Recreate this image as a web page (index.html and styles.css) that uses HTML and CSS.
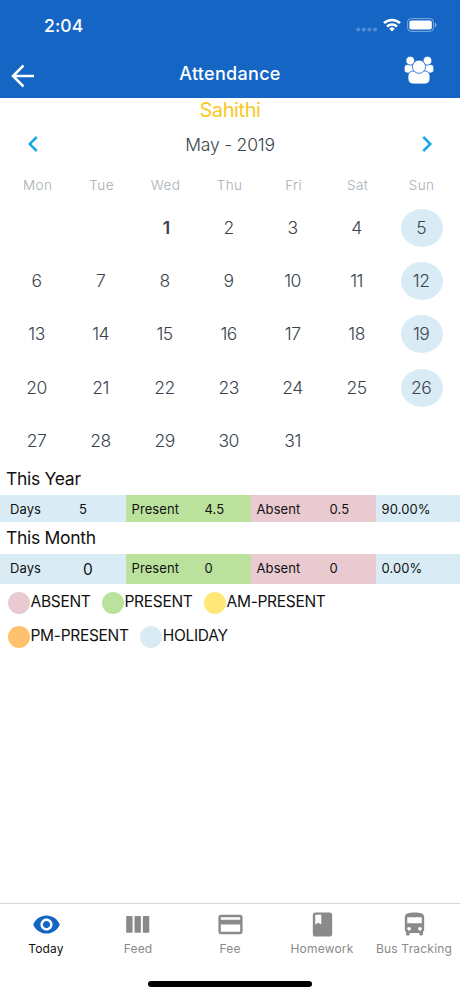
FILE: index.html
```html
<!DOCTYPE html>
<html lang="en">
<head>
    <meta charset="UTF-8">
    <meta name="viewport" content="width=device-width, initial-scale=1.0">
    <title>Attendance</title>
    <link rel="stylesheet" href="styles.css">
</head>
<body>
    <header class="header">
        <div class="status-bar">
            <span class="clock">2:04</span>
            <div class="status-icons">
                <svg width="22" height="5" viewBox="0 0 22 5" fill="#fff" opacity="0.25">
                    <circle cx="2.2" cy="2.5" r="2.1"/><circle cx="7.8" cy="2.5" r="2.1"/>
                    <circle cx="13.4" cy="2.5" r="2.1"/><circle cx="19" cy="2.5" r="2.1"/>
                </svg>
                <svg class="wifi" width="18" height="14" viewBox="0 0 18 14" fill="none" stroke="#fff" stroke-width="2.5">
                    <path d="M1 5.2a11.3 11.3 0 0 1 16 0"/>
                    <path d="M4 8.6a7.1 7.1 0 0 1 10 0"/>
                    <path d="M9 13.5L6.2 10.7a4 4 0 0 1 5.6 0z" fill="#fff" stroke="none"/>
                </svg>
                <svg width="30" height="14" viewBox="0 0 30 14">
                    <rect x=".6" y=".6" width="26" height="12.8" rx="3.8" fill="none" stroke="#fff" stroke-opacity=".45"/>
                    <rect x="2.4" y="2.4" width="22.4" height="9.2" rx="2" fill="#fff"/>
                    <path d="M28 4.8c2 .7 2 3.7 0 4.4z" fill="#fff" opacity=".5"/>
                </svg>
            </div>
        </div>
        <div class="nav-bar">
            <svg class="back" width="24" height="24" viewBox="0 0 24 24" fill="none" stroke="#fff" stroke-width="2.5">
                <path d="M23 12H2.5M12.5 1.5L2 12l10.5 10.5"/>
            </svg>
            <h1 class="title">Attendance</h1>
            <svg class="group" width="30" height="28" viewBox="0 0 30 28" fill="#fff" stroke="#1565c5" stroke-width=".8">
                <rect x=".2" y="8.5" width="12" height="8.5" rx="3"/>
                <rect x="17.8" y="8.5" width="12" height="8.500" rx="3"/>
                <circle cx="6.3" cy="4.7" r="4.4"/>
                <circle cx="23.5" cy="4.7" r="4.4"/>
                <rect x="4" y="15" width="22" height="13" rx="5"/>
                <circle cx="15" cy="10.7" r="6.6"/>
            </svg>
        </div>
    </header>

    <main class="content">
        <div class="student">Sahithi</div>

        <!-- Calendar -->
        <div class="month-bar">
            <svg width="10" height="16" viewBox="0 0 10 16" fill="none" stroke="#18a8e8" stroke-width="2.5"><path d="M8.7 1L1.7 8l7 7"/></svg>
            <span class="month">May - 2019</span>
            <svg width="10" height="16" viewBox="0 0 10 16" fill="none" stroke="#18a8e8" stroke-width="2.5"><path d="M1.3 1l7 7-7 7"/></svg>
        </div>
        <div class="weekdays">
            <span>Mon</span><span>Tue</span><span>Wed</span><span>Thu</span><span>Fri</span><span>Sat</span><span>Sun</span>
        </div>
        <div class="days">
            <span class="day"></span><span class="day"></span><span class="day today">1</span><span class="day">2</span><span class="day">3</span><span class="day">4</span><span class="day holiday">5</span>
            <span class="day">6</span><span class="day">7</span><span class="day">8</span><span class="day">9</span><span class="day">10</span><span class="day">11</span><span class="day holiday">12</span>
            <span class="day">13</span><span class="day">14</span><span class="day">15</span><span class="day">16</span><span class="day">17</span><span class="day">18</span><span class="day holiday">19</span>
            <span class="day">20</span><span class="day">21</span><span class="day">22</span><span class="day">23</span><span class="day">24</span><span class="day">25</span><span class="day holiday">26</span>
            <span class="day">27</span><span class="day">28</span><span class="day">29</span><span class="day">30</span><span class="day">31</span>
        </div>

        <!-- Totals -->
        <h2 class="summary-title">This Year</h2>
        <div class="summary">
            <div class="cell cell-days"><span>Days</span><span>5</span></div>
            <div class="cell cell-present"><span>Present</span><span>4.5</span></div>
            <div class="cell cell-absent"><span>Absent</span><span>0.5</span></div>
            <div class="cell cell-percent">90.00%</div>
        </div>
        <h2 class="summary-title">This Month</h2>
        <div class="summary summary-month">
            <div class="cell cell-days"><span>Days</span><span class="big">0</span></div>
            <div class="cell cell-present"><span>Present</span><span>0</span></div>
            <div class="cell cell-absent"><span>Absent</span><span>0</span></div>
            <div class="cell cell-percent">0.00%</div>
        </div>

        <div class="legend">
            <div class="legend-item"><i class="dot absent"></i><span>ABSENT</span></div>
            <div class="legend-item"><i class="dot present"></i><span>PRESENT</span></div>
            <div class="legend-item"><i class="dot am"></i><span>AM-PRESENT</span></div>
            <div class="legend-item"><i class="dot pm"></i><span>PM-PRESENT</span></div>
            <div class="legend-item"><i class="dot off"></i><span>HOLIDAY</span></div>
        </div>
    </main>

    <footer class="footer">
        <nav class="tabs">
            <div class="tab active">
                <svg viewBox="0 0 24 24"><path d="M12 4.5C7 4.5 2.73 7.61 1 12c1.73 4.39 6 7.5 11 7.5s9.27-3.11 11-7.5c-1.73-4.39-6-7.5-11-7.5zM12 17c-2.76 0-5-2.24-5-5s2.24-5 5-5 5 2.24 5 5-2.24 5-5 5zm0-8c-1.66 0-3 1.34-3 3s1.34 3 3 3 3-1.34 3-3-1.34-3-3-3z"/></svg>
                <span>Today</span>
            </div>
            <div class="tab">
                <svg viewBox="0 0 24 24"><rect x="1.8" y="4.9" width="5.3" height="14" rx=".7"/><rect x="8.7" y="4.9" width="5.3" height="14" rx=".7"/><rect x="15.6" y="4.9" width="5.3" height="14" rx=".7"/></svg>
                <span>Feed</span>
            </div>
            <div class="tab">
                <svg viewBox="0 0 24 24"><path d="M20 4H4c-1.11 0-1.99.89-1.99 2L2 18c0 1.11.89 2 2 2h16c1.11 0 2-.89 2-2V6c0-1.11-.89-2-2-2zm0 14H4v-6h16v6zm0-10H4V6h16v2z"/></svg>
                <span>Fee</span>
            </div>
            <div class="tab">
                <svg viewBox="0 0 24 24"><path d="M18 2H6c-1.1 0-2 .9-2 2v16c0 1.1.9 2 2 2h12c1.1 0 2-.9 2-2V4c0-1.1-.9-2-2-2zM6 4h5v8l-2.5-1.5L6 12V4z"/></svg>
                <span>Homework</span>
            </div>
            <div class="tab">
                <svg viewBox="0 0 24 24"><path d="M4 16c0 .88.39 1.67 1 2.22V20c0 .55.45 1 1 1h1c.55 0 1-.45 1-1v-1h8v1c0 .55.45 1 1 1h1c.55 0 1-.45 1-1v-1.78c.61-.55 1-1.34 1-2.22V6c0-3.5-3.58-4-8-4s-8 .5-8 4v10zm3.5 1c-.83 0-1.5-.67-1.5-1.5S6.67 14 7.5 14s1.5.67 1.5 1.5S8.33 17 7.5 17zm9 0c-.83 0-1.5-.67-1.5-1.5s.67-1.5 1.5-1.5 1.5.67 1.5 1.5-.67 1.5-1.5 1.5zm1.5-6H6V6h12v5z"/></svg>
                <span>Bus Tracking</span>
            </div>
        </nav>
        <div class="home-indicator"></div>
    </footer>
</body>
</html>
```
FILE: styles.css
```css
* {
    box-sizing: border-box;
}

body {
    margin: 0;
    height: 996px;
    display: flex;
    flex-direction: column;
    font-family: Inter, "Liberation Sans", sans-serif;
    color: #111;
    background: #fff;
    overflow: hidden;
}

svg {
    display: block;
    flex: none;
}

.header {
    height: 98px;
    background: #1565c5;
    color: #fff;
}

.status-bar {
    height: 50px;
    padding: 0 23.5px 0 44px;
    display: flex;
    align-items: center;
    justify-content: space-between;
}

.clock {
    font-size: 17.5px;
    font-weight: 500;
    letter-spacing: 0.1px;
}

.status-icons {
    display: flex;
    align-items: center;
    gap: 5px;
}

.status-icons svg:first-child {
    margin-top: 9px;
}

.wifi {
    margin-right: 1px;
}

.nav-bar {
    height: 48px;
    padding: 0 26.5px 0 11px;
    display: grid;
    grid-template-columns: 54px 1fr 38.5px;
    align-items: center;
}

.back {
    margin-top: 4px;
}

.title {
    margin: -2px 0 0;
    font-size: 18px;
    font-weight: 500;
    letter-spacing: 0.3px;
    text-align: center;
}

.group {
    justify-self: end;
    margin-top: -8px;
}

.content {
    flex: 1;
}

.student {
    height: 25px;
    line-height: 25px;
    font-size: 20px;
    letter-spacing: -0.4px;
    text-align: center;
    color: #f8c922;
}

.month-bar {
    height: 42px;
    padding: 0 28px;
    display: flex;
    align-items: center;
    justify-content: space-between;
}

.month {
    font-size: 17.5px;
    font-weight: 300;
    letter-spacing: -0.2px;
    color: #39434b;
}

.weekdays,
.days {
    display: grid;
    grid-template-columns: repeat(7, 64px);
    padding-left: 5.6px;
    justify-items: center;
    align-items: center;
}

.weekdays {
    height: 36px;
    padding-top: 4px;
    font-size: 13.5px;
    letter-spacing: 0.4px;
    font-weight: 300;
    color: #a6aeb4;
}

.days {
    grid-auto-rows: 53.3px;
    height: 267px;
}

.day {
    width: 42px;
    height: 38px;
    line-height: 38px;
    padding-right: 2px;
    border-radius: 21px / 19px;
    text-align: center;
    font-size: 17.5px;
    font-weight: 300;
    letter-spacing: -0.5px;
    color: #39434b;
}

.today {
    font-weight: 600;
    padding-left: 3px;
}

.holiday {
    padding-right: 1px;
    background: #d9ecf6;
}

.summary-title {
    margin: 0;
    height: 27px;
    line-height: 22px;
    padding-left: 6px;
    font-size: 17.5px;
    font-weight: 400;
    letter-spacing: -0.3px;
}

.summary {
    height: 27px;
    margin-bottom: 5px;
    display: grid;
    grid-template-columns: 125.5px 125px 125px 1fr;
    font-size: 13px;
    letter-spacing: 0.1px;
}

.summary-month {
    height: 30px;
}

.cell {
    display: grid;
    grid-template-columns: 73px 1fr;
    align-items: center;
    padding-left: 6px;
}

.summary-month .cell {
    padding-bottom: 2px;
}

.cell-days {
    grid-template-columns: 69px 1fr;
    padding-left: 10px;
    background: #d9ecf6;
}

.cell-present {
    background: #bbe29d;
}

.cell-absent {
    background: #e9cad1;
}

.cell-percent {
    background: #d9ecf6;
}

.big {
    font-size: 15.5px;
    padding: 2px 0 0 4px;
}

.legend {
    display: flex;
    flex-wrap: wrap;
    column-gap: 11.5px;
    padding: 0 8px;
    width: 400px;
}

.legend-item {
    display: flex;
    height: 33.5px;
    line-height: 26px;
    font-size: 15.5px;
    letter-spacing: -0.3px;
}

.dot {
    width: 22px;
    height: 22px;
    margin-top: 3px;
    margin-right: 0.5px;
    border-radius: 50%;
}

.absent {
    background: #e9cad1;
}

.present {
    background: #bbe29d;
}

.am {
    background: #ffe878;
}

.pm {
    background: #ffc16d;
}

.off {
    background: #d9ecf6;
}

.footer {
    height: 93px;
    border-top: 1px solid #d6d6d6;
}

.tabs {
    height: 77px;
    padding-top: 6px;
    display: grid;
    grid-template-columns: repeat(5, 1fr);
}

.tab {
    display: flex;
    flex-direction: column;
    align-items: center;
    font-size: 12px;
    letter-spacing: 0.2px;
    line-height: 20px;
    white-space: nowrap;
    color: #8a8a8a;
}

.tab svg {
    width: 29px;
    height: 29px;
    fill: #8a8a8a;
}

.tab.active {
    color: #111;
}

.tab.active svg {
    fill: #1565c5;
}

.home-indicator {
    width: 164px;
    height: 6px;
    margin: 0 auto;
    border-radius: 3px;
    background: #000;
}
```
